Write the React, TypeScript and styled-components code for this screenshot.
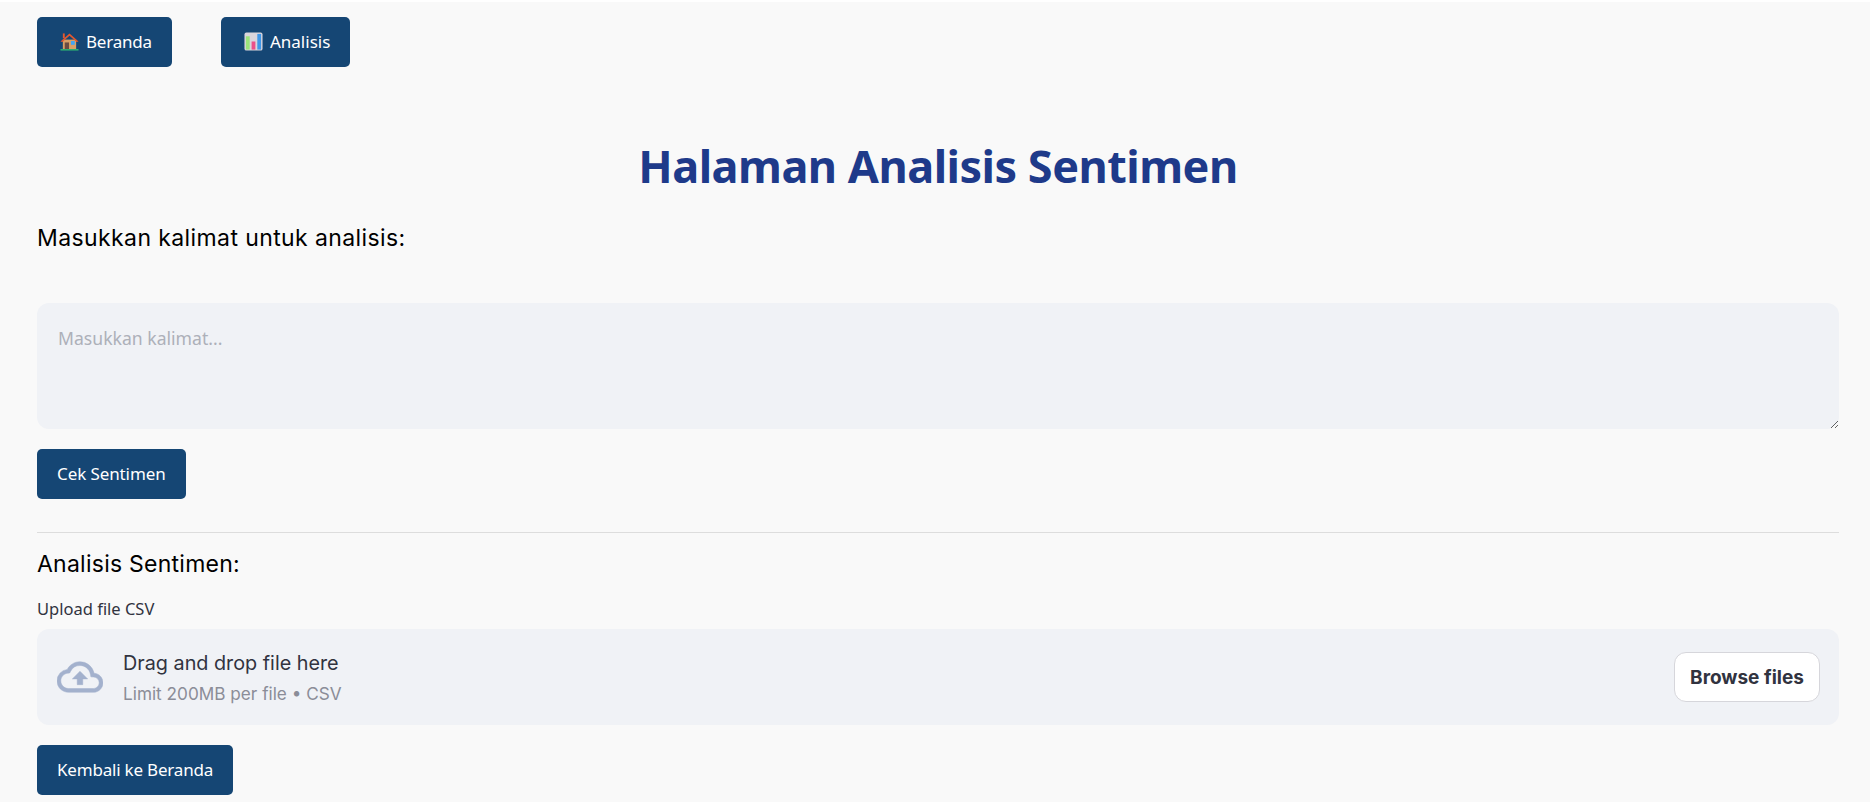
import React from "react";
import styled, { createGlobalStyle } from "styled-components";

const GlobalStyle = createGlobalStyle`
  html, body {
    margin: 0;
    padding: 0;
    background: #f9f9f9;
  }
  * {
    box-sizing: border-box;
  }
`;

const Page = styled.div`
  height: 802px;
  overflow: hidden;
  border-top: 2px solid #ffffff;
  padding: 15px 31px 0 37px;
  background: #f9f9f9;
  font-family: "Noto Sans", "Open Sans", sans-serif;
`;

const NavRow = styled.nav`
  display: flex;
  gap: 49px;
`;

const Button = styled.button<{ $tracking?: number }>`
  display: flex;
  align-items: center;
  justify-content: center;
  height: 50px;
  padding: 0 20px 2px;
  border: none;
  border-radius: 5px;
  background: #154674;
  color: #ffffff;
  font-family: inherit;
  font-size: 17px;
  letter-spacing: ${(p) => p.$tracking ?? -0.2}px;
`;

const NavButton = styled(Button)`
  gap: 7px;
  padding-left: 23px;
  svg {
    flex: none;
    width: 19px;
    height: 19px;
  }
`;

const Title = styled.h1`
  margin: 61px 0 0;
  height: 76px;
  line-height: 76px;
  text-align: center;
  color: #1e3a8a;
  font-size: 45px;
  font-weight: 700;
  letter-spacing: -0.5px;
`;

const Heading = styled.h2`
  margin: 0;
  color: #000000;
  font-family: Inter, sans-serif;
  font-size: 23px;
  font-weight: 400;
  letter-spacing: 0.4px;
`;

const SentenceLabel = styled(Heading)`
  height: 30px;
  line-height: 30px;
  margin-top: 19px;
`;

const SentenceInput = styled.textarea`
  display: block;
  width: 100%;
  height: 126px;
  margin: 50px 0 20px;
  padding: 23px 21px;
  border: none;
  border-radius: 12px;
  outline: none;
  background: #f0f2f6;
  font-family: inherit;
  font-size: 17.6px;
  resize: vertical;
  &::placeholder {
    color: #adb0b9;
  }
`;

const Divider = styled.hr`
  margin: 33px 0 0;
  border: none;
  border-top: 1px solid #dddddd;
`;

const ResultHeading = styled(Heading)`
  height: 30px;
  line-height: 30px;
  margin-top: 16px;
  letter-spacing: 0.25px;
`;

const UploadLabel = styled.div`
  margin-top: 19px;
  height: 22px;
  line-height: 22px;
  color: #31333f;
  font-size: 16.5px;
`;

const DropZone = styled.div`
  display: flex;
  align-items: center;
  height: 96px;
  margin: 9px 0 20px;
  padding: 0 19px 0 20px;
  border-radius: 12px;
  background: #f0f2f6;
`;

const CloudIcon = styled.svg`
  flex: none;
  width: 46px;
  height: 46px;
  color: #a3b1cd;
`;

const DropText = styled.div`
  flex: 1;
  margin-left: 20px;
  font-family: Inter, sans-serif;
`;

const DropTitle = styled.div`
  color: #31333f;
  font-size: 19.8px;
  line-height: 33px;
`;

const DropHint = styled.div`
  color: #8b8d98;
  font-size: 17.2px;
  line-height: 28px;
`;

const BrowseButton = styled.button`
  width: 146px;
  height: 50px;
  padding-bottom: 1px;
  border: 1px solid #d6d6db;
  border-radius: 12px;
  background: #ffffff;
  color: #31333f;
  font-family: Inter, sans-serif;
  font-size: 19px;
  font-weight: 700;
`;

const HouseIcon = () => (
  <svg viewBox="0 0 20 20">
    <rect x="3" y="8" width="14" height="10" fill="#d9a066" />
    <path d="M0.5 10 L10 1.5 L19.5 10 L17.5 10.5 L10 4 L2.5 10.5 Z" fill="#e4572e" />
    <rect x="3" y="1.5" width="2" height="5" fill="#e4572e" />
    <rect x="5" y="11" width="4.5" height="7" fill="#6d4c41" />
    <rect x="11.5" y="9.5" width="4" height="4" fill="#42a5f5" />
    <rect x="0.5" y="18" width="19" height="1.5" fill="#2eb872" />
  </svg>
);

const ChartIcon = () => (
  <svg viewBox="0 0 20 20">
    <rect x="0.5" y="0.5" width="19" height="19" rx="2" fill="#d9d5dc" />
    <rect x="2" y="4.5" width="4" height="14" fill="#9be37a" />
    <rect x="8" y="10" width="4" height="8.5" fill="#ec4f8a" />
    <rect x="14" y="2" width="4" height="16.5" fill="#3f97e8" />
  </svg>
);

export default function App() {
  return (
    <>
      <GlobalStyle />
      <Page>
        <NavRow>
          <NavButton>
            <HouseIcon />
            Beranda
          </NavButton>
          <NavButton $tracking={0}>
            <ChartIcon />
            Analisis
          </NavButton>
        </NavRow>
        <Title>Halaman Analisis Sentimen</Title>
        <SentenceLabel>Masukkan kalimat untuk analisis:</SentenceLabel>
        <SentenceInput placeholder="Masukkan kalimat..." />
        <Button $tracking={-0.1}>Cek Sentimen</Button>
        <Divider />
        <ResultHeading>Analisis Sentimen:</ResultHeading>
        <UploadLabel>Upload file CSV</UploadLabel>
        <DropZone>
          <CloudIcon viewBox="0 0 24 24" fill="currentColor" stroke="currentColor" strokeWidth="0.25">
            <path d="M19.35 10.04A7.49 7.49 0 0 0 12 4C9.11 4 6.6 5.64 5.35 8.04A5.994 5.994 0 0 0 0 14c0 3.31 2.69 6 6 6h13c2.76 0 5-2.24 5-5 0-2.64-2.05-4.78-4.65-4.96zM19 18H6c-2.21 0-4-1.79-4-4 0-2.05 1.53-3.76 3.56-3.97l1.07-.11.5-.95A5.469 5.469 0 0 1 12 6c2.62 0 4.88 1.86 5.39 4.43l.3 1.5 1.53.11A2.98 2.98 0 0 1 22 15c0 1.65-1.35 3-3 3zM8 13h2.55v3h2.9v-3H16l-4-4z" />
          </CloudIcon>
          <DropText>
            <DropTitle>Drag and drop file here</DropTitle>
            <DropHint>Limit 200MB per file • CSV</DropHint>
          </DropText>
          <BrowseButton>Browse files</BrowseButton>
        </DropZone>
        <Button>Kembali ke Beranda</Button>
      </Page>
    </>
  );
}
